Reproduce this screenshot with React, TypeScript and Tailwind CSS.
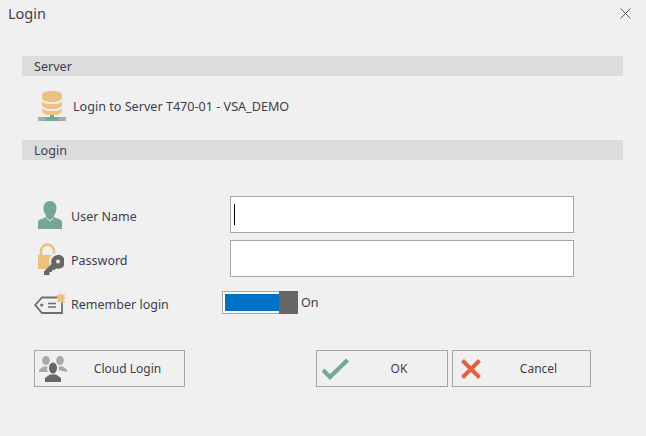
function Db() {
  return (
    <svg width="28" height="30" viewBox="0 0 28 30" className="block">
      <path d="M4 4c0-2.500 4.500-4 10-4s10 1.500 10 4v3c0 2.500-4.500 4-10 4S4 9.500 4 7z" fill="#ecc17f" />
      <path d="M4 10.500c1.500 1.800 5.500 2.500 10 2.500s8.500-.7 10-2.500V14c0 2.500-4.500 4-10 4S4 16.500 4 14z" fill="#ecc17f" />
      <path d="M4 17.500c1.500 1.800 5.500 2.500 10 2.500s8.500-.7 10-2.500V20c0 2.500-4.500 4-10 4S4 22.500 4 20z" fill="#ecc17f" />
      <rect x="0" y="26" width="28" height="4" fill="#a9a9a9" />
      <rect x="12" y="24" width="4" height="3" fill="#74a892" />
      <rect x="8" y="26" width="12" height="4" fill="#74a892" />
    </svg>
  );
}
function User() {
  return (
    <svg width="24" height="28" viewBox="0 0 24 28" className="block">
      <path d="M12 0c4 0 6.500 3 6.500 7 0 2.500-.8 5-2.200 7-.8 1.100-.6 2 .4 2.500L22 18.500c1.300.6 2 1.500 2 3V28H0v-6.500c0-1.500.7-2.400 2-3l5.300-2c1-.5 1.200-1.400.4-2.500C6.300 12 5.500 9.500 5.500 7c0-4 2.500-7 6.500-7z" fill="#74a892" />
      <path d="M8.500 17 12 20l3.500-3" fill="none" stroke="#f0f0f0" strokeWidth="1" />
    </svg>
  );
}
function LockKey() {
  return (
    <svg width="26" height="32" viewBox="0 0 26 32" className="block">
      <path d="M3 12V8a6.500 6.500 0 0 1 13 0v4" fill="none" stroke="#ecc17f" strokeWidth="2.500" />
      <rect x="0" y="12" width="17" height="14" fill="#ecc17f" />
      <circle cx="19" cy="18" r="8" fill="#f0f0f0" />
      <path d="M6 32v-3.500l7.500-7.500a7 7 0 1 1 4.500 4.500l-1.500 1.500H14V29h-2.500v3z" fill="#666666" />
      <circle cx="20" cy="18.500" r="2" fill="#f0f0f0" />
    </svg>
  );
}
function Tag() {
  return (
    <svg width="32" height="22" viewBox="0 0 32 22" className="block">
      <path d="M24 5.500H8L1.200 13 8 21h20V10" fill="none" stroke="#6e6e6e" strokeWidth="1.800" />
      <circle cx="7.700" cy="13" r="1.600" fill="#6e6e6e" />
      <path d="M14 11.500h8M14 15h8" stroke="#6e6e6e" strokeWidth="1.600" />
      <path d="M27 0l1 3 3-1-1 3 2 1-2 1.500 1 3-3-1-1 2.500-1-2.500-3 1 1-3-2-1.500 2-1-1-3 3 1z" fill="#ecc17f" />
    </svg>
  );
}
function People() {
  return (
    <svg width="28" height="26" viewBox="0 0 28 26" className="block">
      <ellipse cx="7" cy="4.500" rx="3.800" ry="4.500" fill="#a8a8a8" />
      <path d="M0 16v-2l4-3.500h6L13 13v3z" fill="#a8a8a8" />
      <ellipse cx="21" cy="4.500" rx="3.800" ry="4.500" fill="#a8a8a8" />
      <path d="M15 13l3-2.500h6l4 3.500v2z" fill="#a8a8a8" />
      <circle cx="14" cy="13" r="6" fill="#f0f0f0" />
      <ellipse cx="14" cy="12" rx="4" ry="5.500" fill="#666666" />
      <path d="M6 26v-4l5-3.500h6l5 3.500v4z" fill="#666666" />
    </svg>
  );
}
function Check() {
  return (
    <svg width="28" height="22" viewBox="0 0 28 22" className="block">
      <path d="M2 12l7 7L26.500 2" fill="none" stroke="#74a892" strokeWidth="4.200" />
    </svg>
  );
}
function Cross() {
  return (
    <svg width="20" height="20" viewBox="0 0 20 20" className="block">
      <path d="M1.500 1.500l17 17M18.500 1.500l-17 17" fill="none" stroke="#e0623f" strokeWidth="4" />
    </svg>
  );
}
function Close() {
  return (
    <svg width="11" height="11" viewBox="0 0 11 11" className="block">
      <path d="M.5.5l10 10M10.500.5l-10 10" fill="none" stroke="#555555" strokeWidth="1" />
    </svg>
  );
}
function Bar({ children }: { children: string }) {
  return <div className="h-5 bg-[#dcdcdc] pl-3 pt-[2px] flex items-center text-[12.600px] text-[#3e3e4e]">{children}</div>;
}
function Row({ icon, label, children, width = "w-[159px]" }: { icon: React.ReactNode; label: string; children: React.ReactNode; width?: string }) {
  return (
    <div className="flex items-center h-[37px]">
      <div className="w-[37px] flex justify-start pl-1">{icon}</div>
      <div className={`${width} pt-[5px] text-[12.500px] text-[#3e3e4e]`}>{label}</div>
      {children}
    </div>
  );
}
function Btn({ icon, label, className, labelClass }: { icon: React.ReactNode; label: string; className: string; labelClass: string }) {
  return (
    <div className={`h-[37px] border border-[#a6a6a6] flex items-center text-[12px] text-[#3e3e4e] ${className}`}>
      {icon}
      <span className={`flex-1 text-center ${labelClass}`}>{label}</span>
    </div>
  );
}
export default function App() {
  return (
    <div className="w-[646px] h-[436px] bg-[#f0f0f0] flex flex-col overflow-hidden" style={{ fontFamily: '"Noto Sans", sans-serif' }}>
      <div className="h-14 flex justify-between pl-2 pr-[15px] pt-[3px]">
        <div className="text-[14.500px] leading-5 text-[#3e3e4e]">Login</div>
        <div className="pt-[5px]"><Close /></div>
      </div>
      <div className="pl-[22px] pr-[23px]">
        <Bar>Server</Bar>
        <div className="h-16 flex items-center pl-4 pb-[4px] gap-[7px] text-[12.600px] text-[#3e3e4e]">
          <Db />
          <span className="pt-[3px]">Login to Server T470-01 - VSA_DEMO</span>
        </div>
        <Bar>Login</Bar>
      </div>
      <div className="pl-[34px] pt-9 flex flex-col gap-[7px]">
        <Row icon={<User />} label="User Name">
          <div className="w-[344px] h-[37px] bg-white border border-[#a6a6a6] flex items-center pl-[3px]">
            <div className="w-px h-[21px] bg-black" />
          </div>
        </Row>
        <Row icon={<LockKey />} label="Password">
          <div className="w-[344px] h-[37px] bg-white border border-[#a6a6a6]" />
        </Row>
        <Row icon={<div className="-ml-1"><Tag /></div>} label="Remember login" width="w-[151px]">
          <div className="flex items-center h-[23px] w-[76px] border border-r-0 border-[#a6a6a6] bg-white pl-[2px] py-[2px]">
            <div className="flex-1 h-[17px] bg-[#0072c6]" />
            <div className="w-[19px] h-[23px] bg-[#666666] shrink-0" />
          </div>
          <span className="ml-[3px] pt-[2px] text-[12.500px] text-[#3e3e4e]">On</span>
        </Row>
      </div>
      <div className="pl-[34px] pt-[29px] flex">
        <Btn icon={<div className="pl-1"><People /></div>} label="Cloud Login" labelClass="pl-[4px]" className="w-[151px]" />
        <Btn icon={<div className="pl-1"><Check /></div>} label="OK" labelClass="pl-[2px]" className="w-[132px] ml-[131px]" />
        <Btn icon={<div className="pl-2"><Cross /></div>} label="Cancel" labelClass="pl-[6px]" className="w-[139px] ml-1" />
      </div>
    </div>
  );
}
